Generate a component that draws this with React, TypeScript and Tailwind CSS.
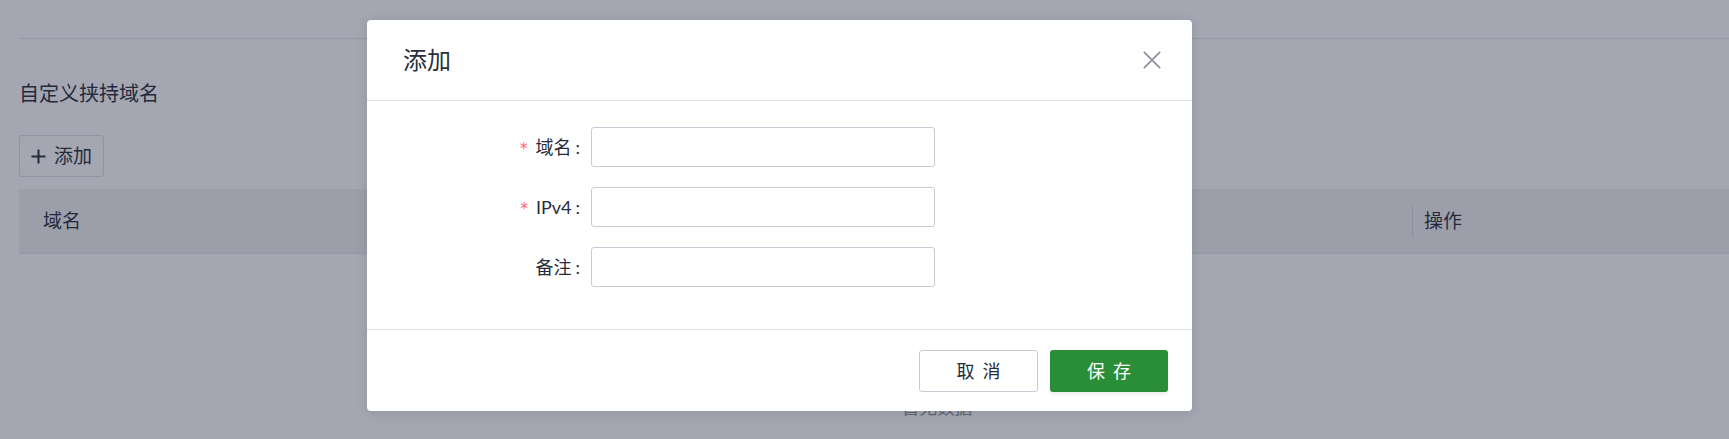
const fontStack = "font-['Lato','Noto_Sans_CJK_SC',sans-serif]";

function Field({ label, required }: { label: string; required?: boolean }) {
  return (
    <div className="flex items-center">
      <label className="w-[213px] flex justify-end items-center text-[18px] text-[#262b3a]">
        {required && (
          <span className="font-['DejaVu_Sans',sans-serif] text-[#f66] mr-[8px] text-[15px] leading-none translate-y-[2px]">*</span>
        )}
        <span>{label}</span>
        <span className="ml-[4px]">:</span>
      </label>
      <input
        className="ml-[11px] w-[344px] h-[40px] rounded-[3px] border border-[#c8cad6] bg-white px-3 outline-none"
        type="text"
      />
    </div>
  );
}

export default function App() {
  return (
    <div className={`relative w-full h-[439px] overflow-hidden bg-white ${fontStack}`}>
      {/* page underneath */}
      <div className="w-[1874px] pl-[19px]">
        <div className="h-[39px] border-b border-[#e4e4ee]" />
        <h2 className="mt-[40px] text-[20px] leading-[28px] text-[#2b2f3e]">自定义挟持域名</h2>
        <button className="mt-[28px] h-[42px] w-[85px] flex items-center justify-center gap-[8px] rounded-[3px] border border-[#dcdfe6] bg-white text-[19px] text-[#2b2f3e]">
          <svg width="15" height="15" viewBox="0 0 15 15" className="shrink-0">
            <path d="M7.5 0.5v14M0.5 7.5h14" stroke="#2b2f3e" strokeWidth="2" fill="none" />
          </svg>
          <span>添加</span>
        </button>
        <div className="mt-[12px] w-[1836px]">
          <div className="flex h-[65px] items-center border-b border-[#e4e4ee] bg-[#f2f2f4] text-[19px] text-[#2b2f3e]">
            <div className="w-[1393px] pl-[24px]">域名</div>
            <div className="h-[31px] border-l border-[#d6d8e0] pl-[11px] flex items-center">操作</div>
          </div>
          <div className="flex justify-center pt-[142px] text-[17.6px] leading-[24px] text-[#909399]">暂无数据</div>
        </div>
      </div>

      {/* overlay */}
      <div className="absolute inset-0 bg-[rgba(28,35,60,0.4)]" />

      {/* dialog */}
      <div className="absolute left-[367px] top-[20px] w-[825px] rounded-[4px] bg-white shadow-[0_2px_12px_rgba(0,0,0,0.12)]">
        <div className="flex h-[81px] items-center justify-between border-b border-[#dcdde6] pl-[36px] pr-[31px]">
          <h3 className="text-[24px] text-[#2a2f3d] -mt-[1px]">添加</h3>
          <svg width="18" height="18" viewBox="0 0 18 18" className="-mt-[1px]">
            <path d="M0.8 0.8L17.2 17.2M17.2 0.8L0.8 17.2" stroke="#8b8fa0" strokeWidth="1.7" fill="none" />
          </svg>
        </div>
        <div className="flex flex-col gap-[20px] pt-[26px] pb-[42px]">
          <Field label="域名" required />
          <Field label="IPv4" required />
          <Field label="备注" />
        </div>
        <div className="flex h-[82px] justify-end gap-[12px] border-t border-[#dcdde6] pt-[20px] pr-[24px]">
          <button className="flex h-[42px] w-[119px] items-center justify-center gap-[8px] rounded-[3px] border border-[#c8cad6] bg-white text-[18px] text-[#262b3a]">
            <span>取</span>
            <span>消</span>
          </button>
          <button className="flex h-[42px] w-[118px] items-center justify-center gap-[8px] rounded-[3px] bg-[#2a8e37] text-[18px] text-white shadow-[0_3px_3px_rgba(0,0,0,0.06)]">
            <span>保</span>
            <span>存</span>
          </button>
        </div>
      </div>
    </div>
  );
}
